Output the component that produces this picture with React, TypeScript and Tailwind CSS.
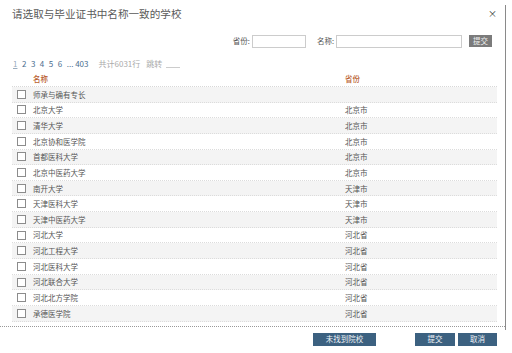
import React from "react";

const rows = [
  { name: "师承与确有专长", prov: "" },
  { name: "北京大学", prov: "北京市" },
  { name: "清华大学", prov: "北京市" },
  { name: "北京协和医学院", prov: "北京市" },
  { name: "首都医科大学", prov: "北京市" },
  { name: "北京中医药大学", prov: "北京市" },
  { name: "南开大学", prov: "天津市" },
  { name: "天津医科大学", prov: "天津市" },
  { name: "天津中医药大学", prov: "天津市" },
  { name: "河北大学", prov: "河北省" },
  { name: "河北工程大学", prov: "河北省" },
  { name: "河北医科大学", prov: "河北省" },
  { name: "河北联合大学", prov: "河北省" },
  { name: "河北北方学院", prov: "河北省" },
  { name: "承德医学院", prov: "河北省" },
];

const font = "font-['Noto_Sans_CJK_SC','Liberation_Sans',sans-serif]";

const App = () => {
  return (
    <div className={`flex w-[512px] h-[353px] bg-white overflow-hidden ${font}`}>
      <div className="w-[505px] flex flex-col">
        {/* title */}
        <div className="flex items-center justify-between h-[28px] pl-[12px] pr-[8px]">
          <h1 className="text-[10.6px] leading-none text-[#5a5a5a]">
            请选取与毕业证书中名称一致的学校
          </h1>
          <button className="text-[9px] leading-none text-[#333] mt-[-1px]">×</button>
        </div>

        {/* search */}
        <div className="flex items-center justify-end h-[26px] pr-[13px] text-[7.5px] text-[#555]">
          <span className="mr-[2px]">省份:</span>
          <input className="w-[54px] h-[13px] border border-[#ccc] bg-white outline-none" />
          <span className="ml-[11px] mr-[2px]">名称:</span>
          <input className="w-[126px] h-[13px] border border-[#ccc] bg-white outline-none" />
          <button className="ml-[7px] w-[23px] h-[12px] bg-[#7b7b7b] text-[#eee] text-[7.5px] leading-none">
            提交
          </button>
        </div>

        {/* pagination */}
        <div className="flex items-center h-[17px] pl-[13px] text-[8px] leading-none mt-[1px]">
          <div className="flex items-center gap-[4.5px] text-[#4a6d8e]">
            <span className="underline text-[#9aacbd]">1</span>
            <span>2</span>
            <span>3</span>
            <span>4</span>
            <span>5</span>
            <span>6</span>
            <span>... 403</span>
          </div>
          <span className="ml-[10px] text-[#aaa]">共计6031行</span>
          <span className="ml-[6px] text-[#aaa]">跳转</span>
          <span className="ml-[4px] w-[14px] h-[8px] border-b border-[#ccc]" />
        </div>

        {/* table */}
        <div className="mx-[12px] w-[485px]">
          <div className="flex items-center h-[15px] border-b border-dotted border-[#d8d8d8] text-[7.5px] font-medium text-[#b95e2e]">
            <span className="pl-[21px] w-[333px]">名称</span>
            <span>省份</span>
          </div>
          {rows.map((r, i) => (
            <div
              key={i}
              className={`flex items-center h-[15.65px] border-b border-dotted border-[#dcdcdc] text-[7.5px] text-[#555] ${
                i % 2 === 0 ? "bg-[#f4f4f4]" : "bg-white"
              }`}
            >
              <div className="w-[333px] flex items-center">
                <span className="ml-[5px] w-[9px] h-[9px] border border-[#8c8c8c] bg-white" />
                <span className="ml-[7px]">{r.name}</span>
              </div>
              <span>{r.prov}</span>
            </div>
          ))}
        </div>

        {/* footer */}
        <div className="mt-[4px] border-t border-dotted border-[#999]" />
        <div className="flex items-center justify-end pr-[8px] mt-[6px] text-[7.5px] text-[#eef2f6]">
          <button className="w-[63px] h-[13px] bg-[#3c6180] leading-none">未找到院校</button>
          <button className="ml-[39px] w-[40px] h-[13px] bg-[#3c6180] leading-none">提交</button>
          <button className="ml-[3px] w-[39px] h-[13px] bg-[#3c6180] leading-none">取消</button>
        </div>
      </div>
      <div className="mt-[5px] w-px h-[325px] bg-[#8a8a8a]" />
    </div>
  );
};

export default App;
